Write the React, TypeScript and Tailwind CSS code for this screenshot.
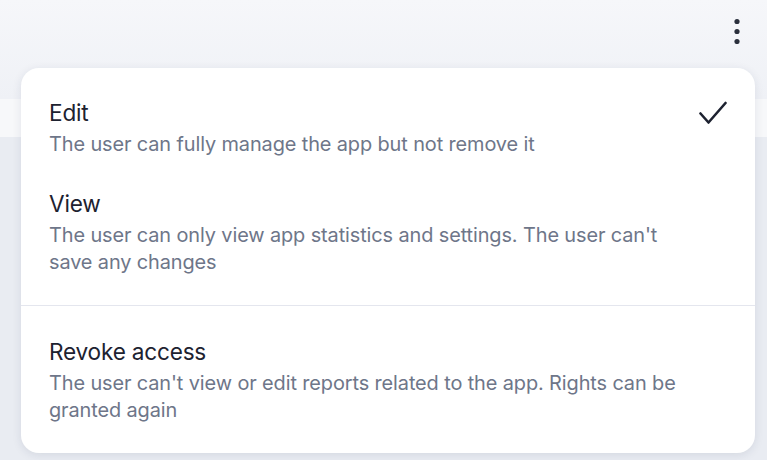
import React from 'react';

interface RoleOption {
  id: string;
  title: string;
  description: string;
  selected?: boolean;
}

const ROLES: RoleOption[] = [
  { id: 'edit', title: 'Edit', description: 'The user can fully manage the app but not remove it', selected: true },
  {
    id: 'view',
    title: 'View',
    description: "The user can only view app statistics and settings. The user can't save any changes",
  },
];

const REVOKE: RoleOption = {
  id: 'revoke',
  title: 'Revoke access',
  description: "The user can't view or edit reports related to the app. Rights can be granted again",
};

export default function App() {
  return (
    <div className="relative h-[460px] w-[767px] overflow-hidden bg-[#e9ecf2] font-['Inter',sans-serif]">
      <div className="h-[99px] bg-gradient-to-b from-[#f6f7fa] to-[#eff1f6]">
        <div className="flex justify-end pr-[27px] pt-[18px]">
          <MoreIcon />
        </div>
      </div>
      <div className="h-[38px] bg-[#f7f8fa]" />

      <div className="absolute left-[21px] top-[68px] w-[734px] rounded-[18px] bg-white pb-[29px] pt-[30px] shadow-[0_2px_10px_rgba(30,40,80,0.10)]">
        {ROLES.map((role, i) => (
          <Option key={role.id} role={role} className={i === 0 ? '' : 'mt-[31px]'} />
        ))}
        <div className="mt-[29px] h-px bg-[#e4e6ee]" />
        <Option role={REVOKE} className="mt-[31px]" />
      </div>
    </div>
  );
}

function Option({ role, className }: { role: RoleOption; className?: string }) {
  return (
    <div className={`flex items-start justify-between pl-[28px] pr-[28px] ${className ?? ''}`}>
      <div className="max-w-[640px]">
        <p className="text-[22.6px] leading-[30px] tracking-[-0.2px] text-[#1d2230]">{role.title}</p>
        <p className="mt-[3px] text-[19.9px] leading-[27px] tracking-[-0.1px] text-[#6e7689]">{role.description}</p>
      </div>
      {role.selected ? <CheckIcon /> : null}
    </div>
  );
}

function CheckIcon() {
  return (
    <svg width="28" height="24" viewBox="0 0 28 24" className="mt-[3px]" fill="none">
      <path d="M1.5 12.5 L9.5 21.5 L26.5 2" stroke="#1d2230" strokeWidth="2.6" strokeLinecap="round" strokeLinejoin="round" />
    </svg>
  );
}

function MoreIcon() {
  return (
    <svg width="6" height="26" viewBox="0 0 6 26" fill="#2a2f3c">
      <circle cx="3" cy="3.5" r="2.6" />
      <circle cx="3" cy="13.5" r="2.6" />
      <circle cx="3" cy="23.5" r="2.6" />
    </svg>
  );
}
